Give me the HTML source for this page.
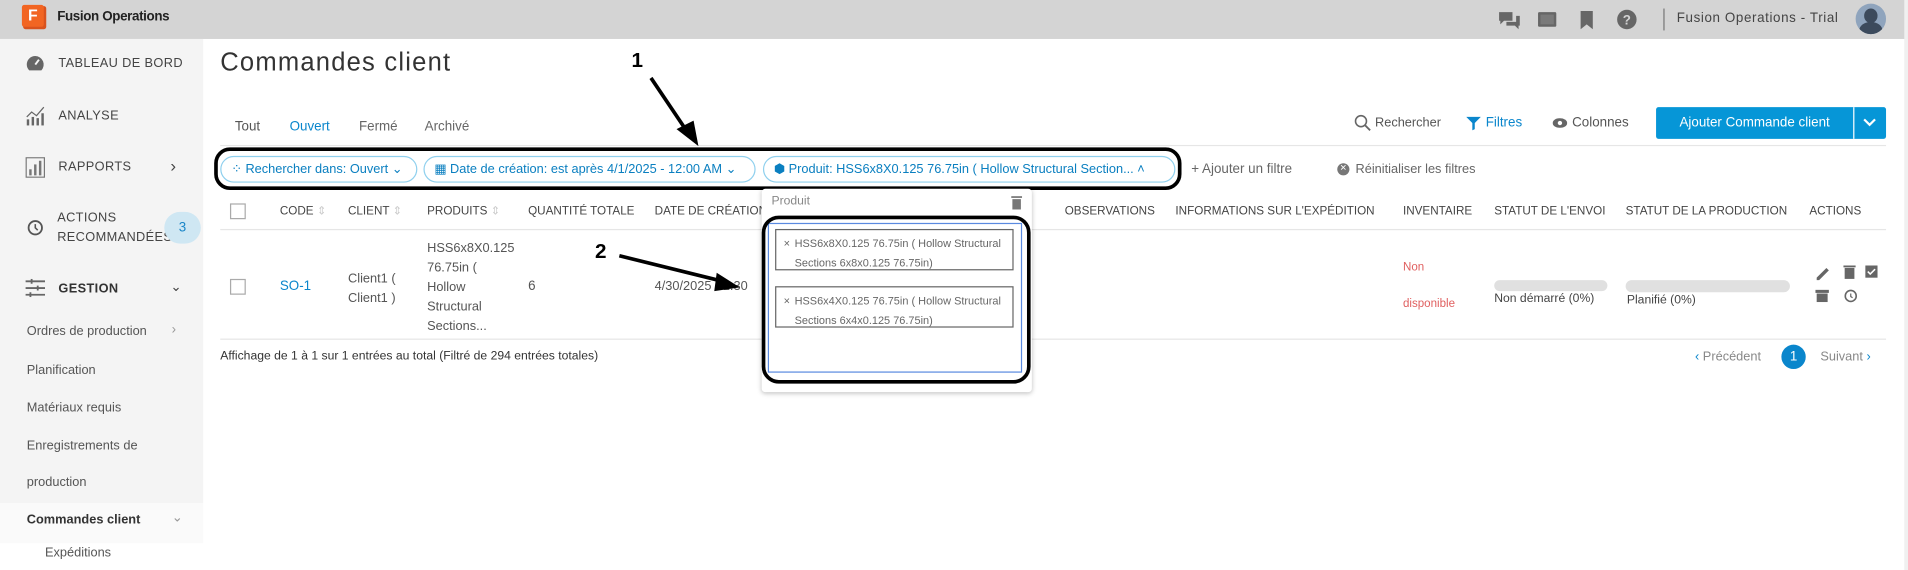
<!DOCTYPE html>
<html><head><meta charset="utf-8"><style>
*{box-sizing:border-box;margin:0;padding:0}
html,body{width:1908px;height:570px;overflow:hidden;background:#fff}
#w{position:absolute;left:0;top:0;width:1568px;height:468px;transform:scale(1.2168,1.2179);transform-origin:0 0;font-family:"Liberation Sans",sans-serif;color:#3c3c3c;font-size:11px}
.a{position:absolute;white-space:nowrap}
.top{left:0;top:0;width:1568px;height:32px;background:#d4d4d4}
.side{left:0;top:32px;width:167px;height:381px;background:#f4f4f4}
.nav{font-size:10.5px;letter-spacing:.3px;color:#444}
.sub{font-size:10.5px;color:#555}
.hd{font-size:9.6px;color:#444}
.chip{height:22px;border:1px solid #8fd0ee;border-radius:11px;color:#0a7fc0;font-size:10.5px;padding:4px 8px;background:#fff;overflow:hidden}
.tag{border:1px solid #666;font-size:9px;color:#666;padding:3px 6px 3px 15px;line-height:16px;width:196px;height:34px;white-space:normal}
.blk{border:3px solid #000}
</style></head><body><div id="w">
<div class="a top"></div>
<div class="a" style="left:19px;top:5px;width:19px;height:19px;background:#d9531e;border-radius:2px"></div>
<div class="a" style="left:18px;top:4px;width:18px;height:18px;background:#f26522;border-radius:2px;color:#fff;font-weight:bold;font-size:13px;text-align:center;line-height:18px">F</div>
<div class="a" style="left:47px;top:8px;font-size:11px;font-weight:bold;color:#222;letter-spacing:-.3px">Fusion Operations</div>
<svg class="a" style="left:1231px;top:7px" width="120" height="18" viewBox="0 0 120 18" fill="#666">
<path d="M1 3h11v7H5l-3 3v-3H1z M7 11h8V6h3v8h-1v3l-3-3H7z"/>
<rect x="33" y="3" width="15" height="12" rx="1"/><rect x="35" y="5" width="11" height="8" fill="#7a7a7a"/>
<path d="M68 2h10v15l-5-4-5 4z"/>
<circle cx="106" cy="9" r="8"/><text x="106" y="13" font-size="11" font-weight="bold" fill="#d4d4d4" text-anchor="middle" font-family="Liberation Sans">?</text>
</svg>
<div class="a" style="left:1367px;top:7px;width:1px;height:18px;background:#777"></div>
<div class="a" style="left:1378px;top:9px;font-size:11px;color:#444;letter-spacing:.5px">Fusion Operations - Trial</div>
<div class="a" style="left:1525px;top:3px;width:25px;height:25px;border-radius:50%;background:#8fa4bd;overflow:hidden"><div style="position:absolute;left:7px;top:4px;width:11px;height:12px;border-radius:50%;background:#3c4a5c"></div><div style="position:absolute;left:3px;top:15px;width:19px;height:14px;border-radius:50%;background:#3c4a5c"></div></div>

<div class="a side"></div>
<div class="a" style="left:0;top:413px;width:167px;height:33px;background:#fafafa"></div>
<svg class="a" style="left:21px;top:44px" width="16" height="16" viewBox="0 0 16 16" fill="#666"><path d="M8 2a7 7 0 0 0-7 7c0 2 .8 3.6 2 4.8h10A7 7 0 0 0 8 2z"/><path d="M8 9l3-4" stroke="#f4f4f4" stroke-width="1.6"/></svg>
<div class="a nav" style="left:48px;top:46px">TABLEAU DE BORD</div>
<svg class="a" style="left:21px;top:87px" width="16" height="16" viewBox="0 0 16 16" fill="#666"><rect x="1" y="11" width="2" height="5"/><rect x="5" y="9" width="2" height="7"/><rect x="9" y="10" width="2" height="6"/><rect x="13" y="6" width="2" height="10"/><path d="M1 9l4-4 4 3 6-7" stroke="#666" fill="none"/></svg>
<div class="a nav" style="left:48px;top:89px">ANALYSE</div>
<svg class="a" style="left:21px;top:129px" width="16" height="17" viewBox="0 0 16 17"><rect x=".5" y=".5" width="15" height="16" fill="none" stroke="#777"/><rect x="3" y="10" width="2" height="5" fill="#777"/><rect x="7" y="6" width="2" height="9" fill="#777"/><rect x="11" y="3" width="2" height="12" fill="#777"/></svg>
<div class="a nav" style="left:48px;top:131px">RAPPORTS</div>
<div class="a" style="left:140px;top:128px;font-size:14px;color:#444">›</div>
<svg class="a" style="left:22px;top:180px" width="14" height="14" viewBox="0 0 14 14"><circle cx="7" cy="7" r="5.5" fill="none" stroke="#555" stroke-width="1.5"/><path d="M7 4v3l2 2" stroke="#555" fill="none" stroke-width="1.3"/></svg>
<div class="a nav" style="left:47px;top:173px">ACTIONS</div>
<div class="a nav" style="left:47px;top:189px">RECOMMANDÉES</div>
<div class="a" style="left:135px;top:174px;width:30px;height:26px;border-radius:13px;background:#cfe7f3;color:#1a86c8;text-align:center;line-height:26px;font-size:11px">3</div>
<svg class="a" style="left:21px;top:229px" width="16" height="15" viewBox="0 0 16 15" stroke="#666" stroke-width="1.5"><path d="M0 2h16M0 7.5h16M0 13h16"/><path d="M5 0v4M10 5.5v4M4 11v4"/></svg>
<div class="a nav" style="left:48px;top:231px;font-weight:bold;color:#333">GESTION</div>
<div class="a" style="left:140px;top:229px;font-size:11px;color:#444">⌄</div>
<div class="a sub" style="left:22px;top:266px">Ordres de production</div>
<div class="a" style="left:141px;top:265px;color:#999">›</div>
<div class="a sub" style="left:22px;top:298px">Planification</div>
<div class="a sub" style="left:22px;top:329px">Matériaux requis</div>
<div class="a sub" style="left:22px;top:360px">Enregistrements de</div>
<div class="a sub" style="left:22px;top:390px">production</div>
<div class="a" style="left:22px;top:421px;font-weight:bold;color:#333;font-size:10.5px">Commandes client</div>
<div class="a" style="left:141px;top:418px;color:#999">⌄</div>
<div class="a sub" style="left:37px;top:448px">Expéditions</div>

<div class="a" style="left:181px;top:40px;font-size:21px;color:#333;letter-spacing:1px">Commandes client</div>
<div class="a" style="left:193px;top:98px;color:#555">Tout</div>
<div class="a" style="left:238px;top:98px;color:#0a86cc">Ouvert</div>
<div class="a" style="left:295px;top:98px;color:#666">Fermé</div>
<div class="a" style="left:349px;top:98px;color:#666">Archivé</div>
<svg class="a" style="left:1113px;top:94px" width="14" height="14" viewBox="0 0 14 14"><circle cx="5.5" cy="5.5" r="4.5" fill="none" stroke="#666" stroke-width="1.3"/><path d="M9 9l4 4" stroke="#666" stroke-width="1.5"/></svg>
<div class="a" style="left:1130px;top:95px;color:#555;font-size:10.5px">Rechercher</div>
<svg class="a" style="left:1205px;top:95px" width="12" height="12" viewBox="0 0 12 12"><path d="M0 1h12L7 6v5L5 12V6z" fill="#0a86cc"/></svg>
<div class="a" style="left:1221px;top:95px;color:#0a86cc">Filtres</div>
<svg class="a" style="left:1276px;top:97px" width="12" height="8" viewBox="0 0 12 8"><ellipse cx="6" cy="4" rx="6" ry="4" fill="#666"/><circle cx="6" cy="4" r="1.8" fill="#fff"/></svg>
<div class="a" style="left:1292px;top:95px;color:#555">Colonnes</div>
<div class="a" style="left:1361px;top:88px;width:189px;height:26px;background:#0696d7;border-radius:2px"></div>
<div class="a" style="left:1361px;top:88px;width:162px;text-align:center;color:#fff;font-size:11px;line-height:26px">Ajouter Commande client</div>
<div class="a" style="left:1523px;top:88px;width:1px;height:26px;background:#fff"></div>
<svg class="a" style="left:1531px;top:97px" width="11" height="7" viewBox="0 0 11 7"><path d="M1 1l4.5 4.5L10 1" stroke="#fff" stroke-width="1.8" fill="none"/></svg>
<div class="a" style="left:181px;top:119px;width:1369px;height:1px;background:#e6e6e6"></div>

<div class="a chip" style="left:181px;top:128px;width:162px">⁘ Rechercher dans: Ouvert ⌄</div>
<div class="a chip" style="left:348px;top:128px;width:273px">▦ Date de création: est après 4/1/2025 - 12:00 AM ⌄</div>
<div class="a chip" style="left:627px;top:128px;width:339px">⬢ Produit: HSS6x8X0.125 76.75in ( Hollow Structural Section... ˄</div>
<div class="a blk" style="left:176px;top:121px;width:795px;height:35px;border-radius:13px"></div>
<div class="a" style="left:979px;top:133px;color:#666">+ Ajouter un filtre</div>
<div class="a" style="left:1099px;top:134px;width:10px;height:10px;border-radius:50%;background:#777;color:#fff;font-size:7px;text-align:center;line-height:10px">✕</div>
<div class="a" style="left:1114px;top:133px;color:#666;font-size:10.5px">Réinitialiser les filtres</div>

<div class="a" style="left:189px;top:167px;width:13px;height:13px;border:1px solid #aaa"></div>
<div class="a hd" style="left:230px;top:168px">CODE <span style="color:#ccc">⇕</span></div>
<div class="a hd" style="left:286px;top:168px">CLIENT <span style="color:#ccc">⇕</span></div>
<div class="a hd" style="left:351px;top:168px">PRODUITS <span style="color:#ccc">⇕</span></div>
<div class="a hd" style="left:434px;top:168px">QUANTITÉ TOTALE</div>
<div class="a hd" style="left:538px;top:168px">DATE DE CRÉATION</div>
<div class="a hd" style="left:875px;top:168px">OBSERVATIONS</div>
<div class="a hd" style="left:966px;top:168px">INFORMATIONS SUR L'EXPÉDITION</div>
<div class="a hd" style="left:1153px;top:168px">INVENTAIRE</div>
<div class="a hd" style="left:1228px;top:168px">STATUT DE L'ENVOI</div>
<div class="a hd" style="left:1336px;top:168px">STATUT DE LA PRODUCTION</div>
<div class="a hd" style="left:1487px;top:168px">ACTIONS</div>
<div class="a" style="left:181px;top:188px;width:1369px;height:1px;background:#e6e6e6"></div>

<div class="a" style="left:189px;top:229px;width:13px;height:13px;border:1px solid #aaa"></div>
<div class="a" style="left:230px;top:229px;color:#0a86cc">SO-1</div>
<div class="a" style="left:286px;top:221px;color:#555;line-height:16px;font-size:10.5px">Client1 (<br>Client1 )</div>
<div class="a" style="left:351px;top:196px;color:#555;line-height:16px;font-size:10.5px">HSS6x8X0.125<br>76.75in (<br>Hollow<br>Structural<br>Sections...</div>
<div class="a" style="left:434px;top:229px;color:#555">6</div>
<div class="a" style="left:538px;top:229px;color:#555;font-size:10.5px">4/30/2025 - 1:30</div>
<div class="a" style="left:1153px;top:214px;color:#e06060;font-size:9.5px">Non</div>
<div class="a" style="left:1153px;top:244px;color:#e06060;font-size:9.5px">disponible</div>
<div class="a" style="left:1228px;top:230px;width:93px;height:9px;border-radius:5px;background:#e0e0e0"></div>
<div class="a" style="left:1228px;top:240px;color:#444;font-size:10px">Non démarré (0%)</div>
<div class="a" style="left:1336px;top:230px;width:135px;height:10px;border-radius:5px;background:#e0e0e0"></div>
<div class="a" style="left:1337px;top:241px;color:#444;font-size:10px">Planifié (0%)</div>
<svg class="a" style="left:1491px;top:216px" width="60" height="38" viewBox="0 0 60 38" fill="#666"><path d="M2 12L10 4l2 2-8 8H2z"/><rect x="25" y="4" width="8" height="9"/><rect x="24" y="2" width="10" height="1.5"/><rect x="42" y="2" width="10" height="10"/><path d="M44 7l2 2 4-4" stroke="#fff" fill="none" stroke-width="1.3"/><rect x="1" y="22" width="11" height="2.5"/><rect x="2" y="25" width="9" height="7"/><circle cx="30" cy="27" r="4.5" fill="none" stroke="#666" stroke-width="1.3"/><path d="M30 25v2.5l1.5 1" stroke="#666" fill="none"/></svg>
<div class="a" style="left:181px;top:278px;width:1369px;height:1px;background:#e6e6e6"></div>
<div class="a" style="left:181px;top:287px;color:#333;font-size:10px">Affichage de 1 à 1 sur 1 entrées au total (Filtré de 294 entrées totales)</div>
<div class="a" style="left:1393px;top:287px;color:#888;font-size:10.5px"><span style="color:#0a86cc">‹</span> Précédent</div>
<div class="a" style="left:1464px;top:283px;width:20px;height:20px;border-radius:50%;background:#0a86cc;color:#fff;text-align:center;line-height:20px">1</div>
<div class="a" style="left:1496px;top:287px;color:#888;font-size:10.5px">Suivant <span style="color:#0a86cc">›</span></div>
<div class="a" style="left:1565px;top:0;width:3px;height:468px;background:#f0f0f0"></div>

<div class="a" style="left:626px;top:155px;width:222px;height:167px;background:#fff;box-shadow:0 1px 4px rgba(0,0,0,.25);border-radius:3px"></div>
<div class="a" style="left:634px;top:160px;color:#888;font-size:10px">Produit</div>
<svg class="a" style="left:831px;top:161px" width="9" height="11" viewBox="0 0 9 11" fill="#777"><rect x="0" y="0" width="9" height="1.5"/><rect x="1" y="2.5" width="7" height="8.5"/></svg>
<div class="a" style="left:631px;top:183px;width:209px;height:123px;border:1px solid #5a8ae0"></div>
<div class="a tag" style="left:637px;top:188px"><span style="position:absolute;left:6px">×</span>HSS6x8X0.125 76.75in ( Hollow Structural Sections 6x8x0.125 76.75in)</div>
<div class="a tag" style="left:637px;top:235px"><span style="position:absolute;left:6px">×</span>HSS6x4X0.125 76.75in ( Hollow Structural Sections 6x4x0.125 76.75in)</div>
<div class="a blk" style="left:626px;top:177px;width:221px;height:138px;border-radius:14px"></div>

<div class="a" style="left:519px;top:40px;font-size:17px;font-weight:bold;color:#000">1</div>
<div class="a" style="left:489px;top:197px;font-size:17px;font-weight:bold;color:#000">2</div>
<svg class="a" style="left:0;top:0" width="1568" height="468"><path d="M535 64L566 110" stroke="#000" stroke-width="3"/><path d="M574 120L556 106 570 99z" fill="#000"/><path d="M509 210L594 231" stroke="#000" stroke-width="3"/><path d="M608 236L589 224 587 239z" fill="#000"/></svg>
</div></body></html>
